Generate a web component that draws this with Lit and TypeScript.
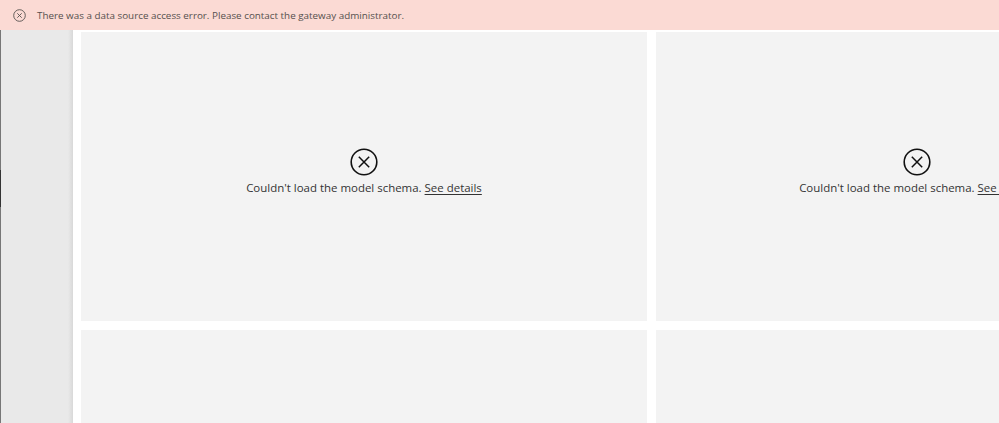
import { LitElement, html, css } from "lit";
import { customElement } from "lit/decorators.js";

@customElement("app-root")
export class AppRoot extends LitElement {
  static styles = css`
    :host {
      display: block;
      width: 999px;
      height: 423px;
      overflow: hidden;
      background: #fff;
      font-family: "Open Sans", "Noto Sans", sans-serif;
      color: #252423;
    }
    .banner {
      height: 30px;
      background: #fbdad4;
      display: flex;
      align-items: center;
      gap: 11.5px;
      padding-left: 12.5px;
      font-size: 9.85px;
      color: #55504e;
      box-sizing: border-box;
    }
    .banner svg { display: block; }
    .body { display: flex; height: 393px; }
    .side {
      flex: 0 0 73px;
      display: flex;
      background: linear-gradient(to right, #e9e9e9 0, #e9e9e9 68px, #dcdcdc 72px, #d8d8d8 73px);
    }
    .line {
      width: 1px;
      background: linear-gradient(
        to bottom,
        #777 0,
        #777 140px,
        #333 140px,
        #333 177px,
        #777 177px
      );
    }
    .grid {
      flex: 1;
      min-width: 0;
      padding: 2px 0 0 8px;
      display: grid;
      grid-template-columns: 566px 522px;
      grid-auto-rows: 289px;
      gap: 9px;
    }
    .tile {
      background: #f3f3f3;
      display: flex;
      flex-direction: column;
      align-items: center;
      padding-top: 115.5px;
      box-sizing: border-box;
      white-space: nowrap;
    }
    .tile svg { display: block; }
    .msg { font-size: 11.46px; line-height: 16px; margin-top: 4.5px; color: #333; }
    .msg u { text-underline-offset: 2px; }
  `;

  tile(content: boolean) {
    if (!content) return html`<div class="tile"></div>`;
    return html`<div class="tile">
      <svg width="28" height="28" viewBox="0 0 28 28" fill="none" stroke="#111" aria-hidden="true">
        <circle cx="14" cy="14" r="12.8" stroke-width="1.6"></circle>
        <path d="M8.8 8.8 19.2 19.2M19.2 8.8 8.8 19.2" stroke-width="1.5"></path>
      </svg>
      <div class="msg">Couldn't load the model schema. <u>See details</u></div>
    </div>`;
  }

  render() {
    return html`
      <div class="banner">
        <svg width="13" height="13" viewBox="0 0 13 13" fill="none" stroke="#55504e" aria-hidden="true">
          <circle cx="6.5" cy="6.5" r="5.8" stroke-width="0.9"></circle>
          <path d="M4.3 4.3 8.7 8.7M8.7 4.3 4.3 8.7" stroke-width="0.9"></path>
        </svg>
        <span>There was a data source access error. Please contact the gateway administrator.</span>
      </div>
      <div class="body">
        <div class="side"><div class="line"></div></div>
        <div class="grid">
          ${this.tile(true)}${this.tile(true)}${this.tile(false)}${this.tile(false)}
        </div>
      </div>
    `;
  }
}
